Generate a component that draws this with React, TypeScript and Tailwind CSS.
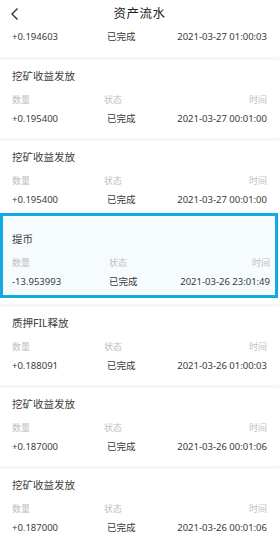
import React from 'react'

type Record = {
  title: string;
  amount: string;
  status: string;
  time: string;
};

const records: Record[] = [
  { title: '挖矿收益发放', amount: '+0.195400', status: '已完成', time: '2021-03-27 00:01:00' },
  { title: '挖矿收益发放', amount: '+0.195400', status: '已完成', time: '2021-03-27 00:01:00' },
  { title: '提币', amount: '-13.953993', status: '已完成', time: '2021-03-26 23:01:49' },
  { title: '质押FIL释放', amount: '+0.188091', status: '已完成', time: '2021-03-26 01:00:03' },
  { title: '挖矿收益发放', amount: '+0.187000', status: '已完成', time: '2021-03-26 00:01:06' },
  { title: '挖矿收益发放', amount: '+0.187000', status: '已完成', time: '2021-03-26 00:01:06' },
];

const Separator = () => <div className="h-[3px] bg-[#f6f6f6]" />;

const ValueRow = ({ r, highlight }: { r: Record; highlight?: boolean }) => (
  <div
    className={`grid ${highlight ? 'grid-cols-[97px_1fr_auto]' : 'grid-cols-[95px_1fr_auto]'} text-[9.5px] leading-[14px] text-[#3a3a3a]`}
  >
    <span>{r.amount}</span>
    <span>{r.status}</span>
    <span>{r.time}</span>
  </div>
);

const LabelRow = ({ highlight }: { highlight?: boolean }) => (
  <div
    className={`grid ${highlight ? 'grid-cols-[97px_1fr_auto]' : 'grid-cols-[92px_1fr_auto]'} text-[9px] leading-[12px] text-[#c0c0c0]`}
  >
    <span>数量</span>
    <span>状态</span>
    <span>时间</span>
  </div>
);

const RecordCard = ({ r, short }: { r: Record; short?: boolean }) => (
  <div className={`px-3 pt-[9px] ${short ? 'pb-[6px]' : 'pb-[12px]'}`}>
    <p className="text-[10.5px] leading-[14px] text-[#404040]">{r.title}</p>
    <div className="mt-[11px]">
      <LabelRow />
    </div>
    <div className="mt-[6px]">
      <ValueRow r={r} />
    </div>
  </div>
);

const HighlightCard = ({ r }: { r: Record }) => (
  <div className="mr-[1px] border-[3px] border-[#15a9e4] bg-[#f6fbfe] pl-[9px] pr-[5px] pt-[16px] pb-[6px]">
    <p className="text-[10.5px] leading-[14px] text-[#404040]">{r.title}</p>
    <div className="mt-[11px]">
      <LabelRow highlight />
    </div>
    <div className="mt-[6px]">
      <ValueRow r={r} highlight />
    </div>
  </div>
);

export default function App() {
  return (
    <div className="w-[279px] h-[534px] overflow-hidden bg-white font-['Noto_Sans','Noto_Sans_CJK_SC',sans-serif]">
      {/* HEADER */}
      <div className="relative flex h-[28px] items-center justify-center">
        <svg
          className="absolute left-[10px] top-[7px]"
          width="10"
          height="14"
          viewBox="0 0 10 14"
          fill="none"
        >
          <path d="M7.5 1.5 L2 7 L7.5 12.5" stroke="#333" strokeWidth="1.4" />
        </svg>
        <h1 className="text-[12.5px] text-[#222] tracking-[0.5px]">资产流水</h1>
      </div>

      {/* partial first row */}
      <div className="px-3 pt-[2px] pb-[13px]">
        <ValueRow r={{ title: '', amount: '+0.194603', status: '已完成', time: '2021-03-27 01:00:03' }} />
      </div>
      <Separator />

      <RecordCard r={records[0]} />
      <Separator />
      <RecordCard r={records[1]} short />
      <HighlightCard r={records[2]} />
      <div className="h-[6px]" />
      <Separator />
      <RecordCard r={records[3]} />
      <Separator />
      <RecordCard r={records[4]} />
      <Separator />
      <RecordCard r={records[5]} />
    </div>
  )
}
